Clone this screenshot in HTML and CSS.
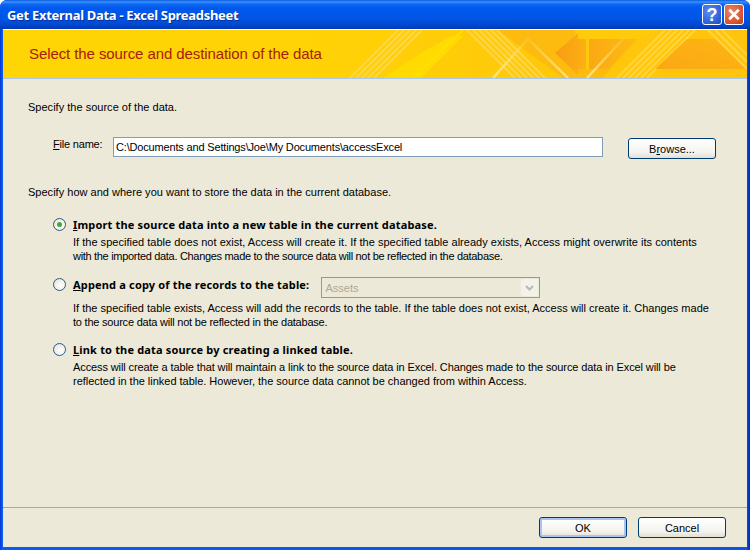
FILE: index.html
```html
<!DOCTYPE html>
<html lang="en">
<head>
<meta charset="utf-8">
<title>Get External Data - Excel Spreadsheet</title>
<link rel="stylesheet" href="styles.css">
</head>
<body>
<div class="window">
  <header class="titlebar">
    <h1 class="title">Get External Data - Excel Spreadsheet</h1>
    <div class="caption-buttons">
      <button class="cap cap-help" type="button">?</button>
      <button class="cap cap-close" type="button" aria-label="Close">
        <svg width="19" height="19" viewBox="0 0 19 19"><path d="M4.5 4.5 L14.5 14.5 M14.5 4.5 L4.5 14.5" stroke="#fff" stroke-width="2.8" fill="none"/></svg>
      </button>
    </div>
  </header>
  <div class="client">
    <div class="banner">
      <svg class="banner-art" width="744" height="48" viewBox="0 0 744 48">
        <defs>
          <linearGradient id="base" x1="0" x2="1" y1="0" y2="0">
            <stop offset="0" stop-color="#ffd505"/>
            <stop offset="0.4" stop-color="#ffd305"/>
            <stop offset="0.7" stop-color="#ffc90a"/>
            <stop offset="1" stop-color="#ffc40e"/>
          </linearGradient>
          <linearGradient id="arrow" x1="0" x2="1" y1="0" y2="0">
            <stop offset="0" stop-color="#f99c12"/>
            <stop offset="1" stop-color="#fcb014"/>
          </linearGradient>
          <linearGradient id="para" x1="0" x2="1" y1="0" y2="0">
            <stop offset="0" stop-color="#fba813"/>
            <stop offset="1" stop-color="#fdbc12"/>
          </linearGradient>
          <linearGradient id="trap" x1="0" x2="1" y1="1" y2="0">
            <stop offset="0" stop-color="#fba813"/>
            <stop offset="1" stop-color="#fdb613"/>
          </linearGradient>
          <linearGradient id="fadeup" x1="0" x2="0" y1="1" y2="0">
            <stop offset="0" stop-color="#ffe48a"/>
            <stop offset="1" stop-color="#ffe48a" stop-opacity=".15"/>
          </linearGradient>
        </defs>
        <rect width="744" height="48" fill="url(#base)"/>
        <polygon points="380,48 418,48 460,6 448,6 420,22" fill="#ffdf00" opacity=".75"/>
        <path d="M410 48 L460 0" stroke="#ffe000" stroke-width="2" fill="none"/>
        <g class="stripes">
          <path d="M347 48 L395 0 M353 48 L401 0 M359 48 L407 0 M365 48 L413 0 M371 48 L419 0"/>
        </g>
        <polygon points="495,0 640,0 600,48 560,48" fill="#fdbb10"/>
        <polygon points="572,0 655,0 640,9 572,9" fill="#ffc90c"/>
        <g class="stripes">
          <path d="M464 0 L512 48 M470 0 L518 48 M476 0 L524 48 M482 0 L530 48 M488 0 L536 48 M494 0 L542 48"/>
        </g>
        <polygon points="552,23 575,3 575,9 583,9 583,39 575,39 575,45" fill="url(#arrow)"/>
        <rect x="583" y="9" width="3" height="30" fill="#ffc90c"/>
        <polygon points="586,9 635,9 605,39 586,39" fill="url(#para)"/>
        <path d="M490 48 L525 9 L565 48" stroke="url(#fadeup)" stroke-width="2.4" fill="none"/>
        <path d="M584 48 L620 9" stroke="url(#fadeup)" stroke-width="2.4" fill="none"/>
        <g class="stripes">
          <path d="M614 48 L662 0 M620 48 L668 0 M626 48 L674 0 M632 48 L680 0 M638 48 L686 0 M644 48 L692 0"/>
        </g>
        <polygon points="652,39 684,9 712,9 744,39" fill="url(#trap)"/>
        <g class="stripes">
          <path d="M705 0 L744 39 M712 0 L744 32 M719 0 L744 25"/>
        </g>
      </svg>
      <h2 class="banner-title">Select the source and destination of the data</h2>
    </div>
    <main class="content">
      <p class="line">Specify the source of the data.</p>
      <div class="file-row">
        <label class="file-label" for="file"><u>F</u>ile name:</label>
        <input class="text-input" id="file" type="text" value="C:\Documents and Settings\Joe\My Documents\accessExcel">
        <button class="btn btn-browse" type="button">B<u>r</u>owse...</button>
      </div>
      <p class="line store-line">Specify how and where you want to store the data in the current database.</p>
      <div class="options">
        <section class="option option-first">
          <div class="option-head">
            <span class="radio radio-on"></span>
            <strong class="option-title"><u>I</u>mport the source data into a new table in the current database.</strong>
          </div>
          <p class="option-text"><span class="ln">If the specified table does not exist, Access will create it. If the specified table already exists, Access might overwrite its contents</span><span class="ln fit-33">with the imported data. Changes made to the source data will not be reflected in the database.</span></p>
        </section>
        <section class="option">
          <div class="option-head option-head-combo">
            <span class="radio"></span>
            <strong class="option-title"><u>A</u>ppend a copy of the records to the table:</strong>
            <div class="combo"><span class="combo-text">Assets</span><span class="combo-arrow"><svg width="9" height="6" viewBox="0 0 9 6"><path d="M1 1 L4.5 4.5 L8 1" stroke="#b9b8ac" stroke-width="2" fill="none"/></svg></span></div>
          </div>
          <p class="option-text"><span class="ln fit-02">If the specified table exists, Access will add the records to the table. If the table does not exist, Access will create it. Changes made</span><span class="ln fit-23">to the source data will not be reflected in the database.</span></p>
        </section>
        <section class="option">
          <div class="option-head">
            <span class="radio"></span>
            <strong class="option-title"><u>L</u>ink to the data source by creating a linked table.</strong>
          </div>
          <p class="option-text"><span class="ln fit-12">Access will create a table that will maintain a link to the source data in Excel. Changes made to the source data in Excel will be</span><span class="ln fit-03">reflected in the linked table. However, the source data cannot be changed from within Access.</span></p>
        </section>
      </div>
    </main>
    <footer class="footer">
      <button class="btn btn-default" type="button">OK</button>
      <button class="btn" type="button">Cancel</button>
    </footer>
  </div>
</div>
</body>
</html>
```
FILE: styles.css
```css
* { box-sizing: border-box; }
html, body { margin: 0; height: 100%; }
body { font-family: "Liberation Sans", Arial, sans-serif; font-size: 11px; letter-spacing: .015px; color: #000; overflow: hidden; background: #fff; }
.window { width: 750px; height: 550px; display: flex; flex-direction: column; background: linear-gradient(90deg, #0832c8 0, #0a5cf0 2px, #0a5cf0 3px, #0a55e6 747px, #0040d0 748px, #0030a8 750px); border-radius: 7px 7px 0 0; overflow: hidden; }
.titlebar { height: 29px; flex: none; display: flex; align-items: center; justify-content: space-between; padding: 0 6px 0 7px;
  background: linear-gradient(180deg, #0a5ae0 0, #3a93ff 2px, #0f68f0 4px, #0058ee 8px, #0055e5 18px, #0048d0 25px, #0038b0 29px); }
.title { margin: 1px 0 0; font: bold 13px/1 "Noto Sans", "DejaVu Sans", sans-serif; letter-spacing: -.3px; color: #fff; text-shadow: 1px 1px 0 #0a2f9a; }
.caption-buttons { display: flex; gap: 2px; }
.cap { width: 20px; height: 21px; padding: 0; border: 1px solid #fff; border-radius: 3px; display: flex; align-items: center; justify-content: center; color: #fff; }
.cap-help { background: radial-gradient(circle at 35% 35%, #5d8cf0, #2d5fd8 70%, #1f46b0); font: bold 18px/1 "Liberation Sans", sans-serif; }
.cap-close { background: radial-gradient(circle at 35% 35%, #e8876a, #d9532f 65%, #b83a18); }
.client { flex: 1; margin: 0 3px 3px 3px; background: #ece9d8; display: flex; flex-direction: column; min-height: 0; border-top: 1px solid #fff; }
.banner { height: 49px; flex: none; position: relative; display: flex; align-items: center; padding: 0 0 2px 26px; border-bottom: 1px solid #a9c5e8; overflow: hidden; }
.banner-art { position: absolute; left: 0; top: 0; }
.stripes { stroke: #ffd955; stroke-width: 2; fill: none; opacity: .75; }
.banner-title { position: relative; margin: 0; font: normal 15px/1 "Liberation Sans", Arial, sans-serif; letter-spacing: -.09px; color: #a6200f; }
.content { flex: 1; padding: 22px 0 0 25px; }
.line { margin: 0; line-height: 13px; }
.file-row { display: flex; align-items: flex-start; margin: 23px 0 0 25px; height: 21px; }
.file-label { width: 60px; margin-top: 1px; line-height: 13px; letter-spacing: -.2px; }
.text-input { width: 490px; height: 20px; padding: 0 2px; border: 1px solid #7f9db9; background: #fff; font: 11px "Liberation Sans", Arial, sans-serif; letter-spacing: -.17px; color: #000; outline: none; }
.btn { width: 88px; height: 21px; padding: 0; border: 1px solid #003c74; border-radius: 3px; background: linear-gradient(180deg, #fff 0, #f4f3ee 70%, #e3e0d2 100%); font: 11px "Liberation Sans", Arial, sans-serif; color: #000; }
.btn-browse { margin: 1px 0 0 25px; }
.store-line { margin-top: 28px; }
.options { margin: 16px 0 0 25px; display: flex; flex-direction: column; gap: 11px; }
.option-first { margin-bottom: 1px; }
.option-head { display: flex; align-items: flex-start; height: 20px; }
.option-head-combo { height: 26px; }
.radio { width: 13px; height: 13px; flex: none; margin: 3px 7px 0 0; border: 1px solid #2f5a8e; border-radius: 50%; background: radial-gradient(circle at 60% 60%, #fff 0, #f0efe6 55%, #d8d6c8 100%); display: flex; align-items: center; justify-content: center; }
.radio-on::after { content: ""; width: 5px; height: 5px; border-radius: 50%; background: #3cab3c; }
.option-title { font-family: "Noto Sans", sans-serif; font-weight: bold; font-size: 11px; line-height: 20px; letter-spacing: .17px; }
.combo { width: 219px; height: 21px; margin: 2px 0 0 12px; padding: 0 1px 0 3px; border: 1px solid #7f9db9; display: flex; align-items: center; justify-content: space-between; background: #ece9d8; color: #aca899; }
.combo-arrow { width: 17px; height: 17px; background: #f3f2ea; border-radius: 2px; display: flex; align-items: center; justify-content: center; }
.option-text { margin: 0 0 0 20px; line-height: 14px; }
.ln { display: block; white-space: nowrap; }
.fit-02 { letter-spacing: 0; }
.fit-03 { letter-spacing: -.02px; }
.fit-12 { letter-spacing: -.105px; }
.fit-23 { letter-spacing: -.215px; }
.fit-33 { letter-spacing: -.31px; }
.footer { height: 40px; flex: none; display: flex; justify-content: flex-end; align-items: flex-start; gap: 11px; padding: 9px 21px 0 0; border-top: 1px solid #aca899; }
.btn-default { box-shadow: inset 0 0 0 2px #a9c4f0; }
```
